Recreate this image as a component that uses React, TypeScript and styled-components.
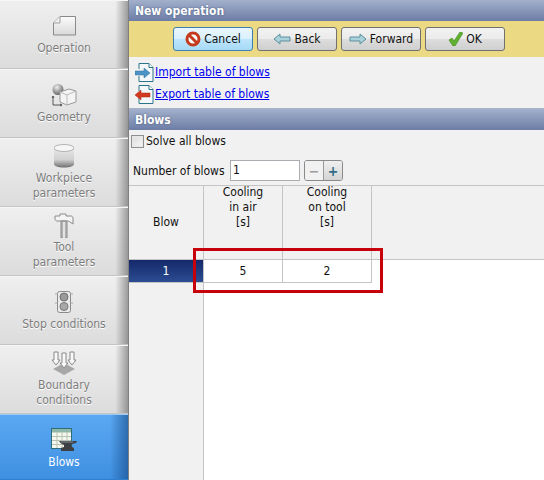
import React from "react";
import styled, { createGlobalStyle } from "styled-components";

const Global = createGlobalStyle`
  html, body { margin: 0; padding: 0; width: 544px; height: 480px; overflow: hidden; background: #f1f1f1; }
  body { font-family: "DejaVu Sans", "Noto Sans", sans-serif; font-stretch: condensed; font-size: 12px; color: #111; }
`;

const Page = styled.div`
  position: relative;
  display: flex;
  width: 544px;
  height: 480px;
  overflow: hidden;
`;

const Sidebar = styled.nav`
  display: flex;
  flex-direction: column;
  width: 128px;
  height: 480px;
  flex: none;
  background: #e6e6e6;
`;

const NavItem = styled.div<{ $active?: boolean; $h?: number; $two?: boolean }>`
  height: ${(p) => p.$h ?? 69}px;
  box-sizing: border-box;
  flex: none;
  display: flex;
  flex-direction: column;
  align-items: center;
  padding-top: ${(p) => (p.$two ? 5 : 13)}px;
  color: ${(p) => (p.$active ? "#ffffff" : "#7d7d7d")};
  text-shadow: ${(p) => (p.$active ? "none" : "0 1px 0 #fff")};
  line-height: 15px;
  text-align: center;
  border-bottom: 1px solid ${(p) => (p.$active ? "#2f7fd0" : "#c4c4c4")};
  border-top: 1px solid ${(p) => (p.$active ? "#9ccbf6" : "#f6f6f6")};
  background: ${(p) =>
    p.$active
      ? "linear-gradient(90deg,rgba(0,0,0,0) 86%,rgba(20,70,130,.6) 100%),linear-gradient(180deg,#5aa8f2,#3f90e2)"
      : "linear-gradient(90deg,rgba(0,0,0,0) 90%,rgba(90,90,90,.55) 100%),linear-gradient(180deg,#efefef,#dcdcdc)"};
`;

const IconSlot = styled.div<{ $two?: boolean }>`
  height: ${(p) => (p.$two ? 27 : 24)}px;
  margin-bottom: ${(p) => (p.$two ? 0 : 3)}px;
  display: flex;
  align-items: ${(p) => (p.$two ? "flex-start" : "center")};
  justify-content: center;
  flex: none;
`;

const Main = styled.main`
  flex: 1;
  display: flex;
  flex-direction: column;
  min-width: 0;
  border-left: 1px solid #7f7f7f;
`;

const SectionBar = styled.div`
  height: 21px;
  flex: none;
  box-sizing: border-box;
  padding-left: 6px;
  background: linear-gradient(180deg, #a3b0cc, #6c7da6);
  color: #fff;
  font-weight: 700;
  line-height: 22px;
  text-shadow: 0 0 2px #46557a;
`;

const Toolbar = styled.div`
  height: 36px;
  flex: none;
  box-sizing: border-box;
  display: flex;
  align-items: center;
  gap: 4px;
  padding-left: 44px;
  background: #ecd983;
`;

const ToolButton = styled.button<{ $focused?: boolean }>`
  width: 80px;
  height: 24px;
  box-sizing: border-box;
  padding: 0;
  display: flex;
  align-items: center;
  justify-content: center;
  gap: 3px;
  border-radius: 3px;
  font: inherit;
  color: #111;
  border: 1px solid ${(p) => (p.$focused ? "#3c7fb1" : "#707070")};
  background: ${(p) =>
    p.$focused
      ? "linear-gradient(180deg,#eaf6fd 0,#d9f0fc 50%,#bee6fd 50%,#a7d9f5 100%)"
      : "linear-gradient(180deg,#f2f2f2 0,#ebebeb 50%,#dddddd 50%,#cfcfcf 100%)"};
`;

const LinksPanel = styled.div`
  height: 52px;
  flex: none;
  box-sizing: border-box;
  padding: 7px 0 0 6px;
  display: flex;
  flex-direction: column;
  gap: 5px;
  border-bottom: 1px solid #a9b2c8;
`;

const LinkRow = styled.div`
  display: flex;
  align-items: center;
  height: 17px;
`;

const LinkText = styled.a`
  color: #0000ee;
  text-decoration: underline;
  line-height: 17px;
`;

const CheckRow = styled.label`
  height: 22px;
  flex: none;
  box-sizing: border-box;
  display: flex;
  align-items: center;
  gap: 2px;
  padding-left: 2px;
`;

const CheckBox = styled.span`
  width: 13px;
  height: 13px;
  box-sizing: border-box;
  border: 1px solid #8e8f8f;
  background: linear-gradient(135deg, #dcdcdc, #f6f6f6);
  box-shadow: inset 0 0 0 1px #e8e8e8;
`;

const CountRow = styled.div`
  height: 34px;
  flex: none;
  box-sizing: border-box;
  display: flex;
  align-items: center;
  padding: 4px 0 0 4px;
  border-bottom: 1px solid #c4c4c4;
`;

const CountLabel = styled.span`
  width: 97px;
  flex: none;
`;

const CountInput = styled.div`
  width: 70px;
  height: 21px;
  box-sizing: border-box;
  border: 1px solid #abadb3;
  background: #fff;
  padding-left: 2px;
  line-height: 19px;
`;

const Stepper = styled.div`
  margin-left: 4px;
  display: flex;
  width: 39px;
  height: 21px;
  box-sizing: border-box;
  border: 1px solid #8a8a8a;
  border-radius: 3px;
  overflow: hidden;
`;

const StepButton = styled.span<{ $on?: boolean }>`
  flex: 1;
  display: flex;
  align-items: center;
  justify-content: center;
  font-weight: 700;
  font-size: 14px;
  line-height: 1;
  color: ${(p) => (p.$on ? "#2f6d86" : "#9a9a9a")};
  background: ${(p) => (p.$on ? "linear-gradient(180deg,#f0f0f0,#d4d4d4)" : "#f1f1f1")};
  & + & { border-left: 1px solid #9a9a9a; }
`;

const Table = styled.div`
  flex: 1;
  display: grid;
  grid-template-columns: 75px 79px 89px 1fr;
  grid-template-rows: 74px 23px 1fr;
  min-height: 0;
`;

const HeadCell = styled.div`
  display: flex;
  align-items: center;
  justify-content: center;
  text-align: center;
  box-sizing: border-box;
  line-height: 15px;
  border-right: 1px solid #c4c4c4;
  border-bottom: 1px solid #c4c4c4;
`;

const HeadLines = styled.div`
  margin-top: -1px;
`;

const HeadTop = styled(HeadCell)`
  align-items: flex-start;
`;

const RowHead = styled.div`
  display: flex;
  align-items: center;
  justify-content: center;
  box-sizing: border-box;
  border-right: 1px solid #c4c4c4;
  border-bottom: 1px solid #c4c4c4;
  color: #fff;
  background: linear-gradient(180deg, #14296a, #2c4c92);
`;

const Cell = styled.div`
  display: flex;
  align-items: center;
  justify-content: center;
  box-sizing: border-box;
  background: #fff;
  border-right: 1px solid #c4c4c4;
  border-bottom: 1px solid #c4c4c4;
`;

const Spacer = styled.div`
  background: #fff;
`;

const LeftFill = styled.div`
  border-right: 1px solid #c4c4c4;
`;

const RightFill = styled.div`
  grid-column: 2 / 5;
  background: #fff;
`;

const HeadFill = styled.div`
  border-bottom: 1px solid #c4c4c4;
`;

const Highlight = styled.div`
  position: absolute;
  left: 193px;
  top: 248px;
  width: 190px;
  height: 45px;
  box-sizing: border-box;
  border: 3px solid #c8000b;
  pointer-events: none;
`;

const ArrowIcon = ({ dir }: { dir: "l" | "r" }) => (
  <svg width="18" height="12" viewBox="0 0 18 12">
    <path
      d={dir === "l" ? "M1 6 7 1v3h10v4H7v3z" : "M17 6 11 1v3H1v4h10v3z"}
      fill="#a9d2da"
      stroke="#5e8f9f"
      strokeWidth="1"
    />
  </svg>
);

const DocArrow = ({ red }: { red?: boolean }) => (
  <svg width="20" height="19" viewBox="0 0 20 19" style={{ flex: "none" }}>
    <path d="M4 .5h10l4 4v14H4z" fill="#f4f8fa" stroke="#2b7489" />
    <path d="M14 .5v4h4" fill="#fff" stroke="#2b7489" />
    <rect x="0" y="6" width="9" height="7" fill="#f1f1f1" />
    {red ? (
      <path d="M0 10 6 5v3h9v4H6v3z" fill="#d23a1f" stroke="#a42a14" strokeWidth=".5" />
    ) : (
      <path d="M15 10 9 5v3H0v4h9v3z" fill="#4c93c6" stroke="#30739f" strokeWidth=".5" />
    )}
  </svg>
);

const icons = {
  operation: (
    <svg width="24" height="20" viewBox="0 0 24 20">
      <defs>
        <linearGradient id="op" x1="0" y1="0" x2="0" y2="1">
          <stop offset="0" stopColor="#fbfbfb" />
          <stop offset="1" stopColor="#d9d9d9" />
        </linearGradient>
      </defs>
      <path d="M8 .5h15.500v18.500H1.500V7z" fill="url(#op)" stroke="#8a8a8a" />
      <path d="M8 .5V7H1.500" fill="#eee" stroke="#a0a0a0" />
    </svg>
  ),
  geometry: (
    <svg width="26" height="24" viewBox="0 0 26 24">
      <defs>
        <radialGradient id="sph" cx=".4" cy=".3" r=".7">
          <stop offset="0" stopColor="#eee" />
          <stop offset="1" stopColor="#666" />
        </radialGradient>
      </defs>
      <circle cx="7" cy="6.500" r="5.500" fill="url(#sph)" />
      <path d="M9 9 18 6l7 2v11l-9 3-7-3z" fill="#f4f4f4" stroke="#999" />
      <path d="M9 9l7 3 9-4M16 12v10" fill="none" stroke="#bbb" />
      <path d="M2 13v9h9M2 13l-1 2M2 13l1 2M11 22l-2-1M11 22l-2 1" fill="none" stroke="#555" />
    </svg>
  ),
  workpiece: (
    <svg width="20" height="24" viewBox="0 0 20 24">
      <defs>
        <linearGradient id="cyl" x1="0" y1="0" x2="0" y2="1">
          <stop offset="0" stopColor="#e8e8e8" />
          <stop offset=".6" stopColor="#d0d0d0" />
          <stop offset="1" stopColor="#6f6f6f" />
        </linearGradient>
      </defs>
      <path d="M0 4v16c0 2 4 3.500 10 3.500S20 22 20 20V4z" fill="url(#cyl)" />
      <ellipse cx="10" cy="4" rx="10" ry="3.500" fill="#f6f6f6" stroke="#8a8a8a" strokeWidth=".6" />
    </svg>
  ),
  tool: (
    <svg width="20" height="25" viewBox="0 0 20 25">
      <path d="M1 3h5V1h6v2h5c1 0 2 1 2 2v6l-3-2c-1-1-2-1-3-1H3C2 8 1 7 1 6z" fill="#f4f4f4" stroke="#8a8a8a" />
      <path d="M7 8h6v17H7z" fill="#b5b5b5" stroke="#8a8a8a" />
      <path d="M9 9h2v16H9z" fill="#e2e2e2" />
    </svg>
  ),
  stop: (
    <svg width="20" height="22" viewBox="0 0 20 22">
      <rect x="3.500" y=".5" width="13" height="21" rx="2" fill="#e9e9e9" stroke="#8b8b8b" />
      <circle cx="10" cy="6" r="4" fill="#9a9a9a" stroke="#6f6f6f" />
      <circle cx="10" cy="15.500" r="4" fill="#a8a8a8" stroke="#777" />
      <path d="M1 3h2.500M1 12h2.500M16.500 3H19M16.500 12H19" stroke="#aaa" />
    </svg>
  ),
  boundary: (
    <svg width="24" height="24" viewBox="0 0 24 24">
      <path d="M12 12 23 18l-11 6L1 18z" fill="#a7a7a7" />
      <path d="M2 1h4v8h2l-4 5-4-5h2zM10 2h4v10h2l-4 5-4-5h2zM18 1h4v8h2l-4 5-4-5h2z" fill="#f8f8f8" stroke="#8a8a8a" />
    </svg>
  ),
  blows: (
    <svg width="26" height="25" viewBox="0 0 26 25">
      <rect x=".5" y=".5" width="20" height="20" fill="#f6f8ef" stroke="#2f6d78" />
      <rect x="1" y="1" width="19" height="3.500" fill="#8fb8a8" />
      <path d="M1 8.500h19M1 12.500h19M1 16.500h19M6 4v16M11 4v16M16 4v16" stroke="#b8c2b0" />
      <path d="M8 13h18l-1 2c-2 0-4 1-5 2l1 2 2 1v3H10v-3l3-1v-2c-2-1-4-2-5-4z" fill="#3d4146" />
      <path d="M10 14h12" stroke="#8a8f95" />
    </svg>
  ),
};

const nav: { icon: React.ReactNode; lines: string[]; h?: number; active?: boolean }[] = [
  { icon: icons.operation, lines: ["Operation"] },
  { icon: icons.geometry, lines: ["Geometry"] },
  { icon: icons.workpiece, lines: ["Workpiece", "parameters"] },
  { icon: icons.tool, lines: ["Tool", "parameters"] },
  { icon: icons.stop, lines: ["Stop conditions"] },
  { icon: icons.boundary, lines: ["Boundary", "conditions"] },
  { icon: icons.blows, lines: ["Blows"], h: 66, active: true },
];

const Cancel = (
  <svg width="16" height="16" viewBox="0 0 16 16">
    <circle cx="8" cy="8" r="6" fill="#fff" stroke="#c43a1c" strokeWidth="3" />
    <path d="M4 4l8 8" stroke="#c43a1c" strokeWidth="3" />
  </svg>
);

const Check = (
  <svg width="15" height="14" viewBox="0 0 15 14">
    <path d="M1 8l3-2 2 3 6-9 3 1-8 13H5z" fill="#5fb12f" stroke="#3f8a1d" strokeWidth=".6" />
  </svg>
);

export default function App() {
  return (
    <>
      <Global />
      <Page>
        <Sidebar>
          {nav.map((n) => {
            const two = n.lines.length > 1;
            return (
              <NavItem key={n.lines[0]} $active={n.active} $h={n.h} $two={two}>
                <IconSlot $two={two}>{n.icon}</IconSlot>
                {n.lines.map((l) => (
                  <span key={l}>{l}</span>
                ))}
              </NavItem>
            );
          })}
        </Sidebar>
        <Main>
          <SectionBar>New operation</SectionBar>
          <Toolbar>
            <ToolButton $focused>{Cancel}Cancel</ToolButton>
            <ToolButton><ArrowIcon dir="l" />Back</ToolButton>
            <ToolButton><ArrowIcon dir="r" />Forward</ToolButton>
            <ToolButton>{Check}OK</ToolButton>
          </Toolbar>
          <LinksPanel>
            <LinkRow><DocArrow /><LinkText href="#">Import table of blows</LinkText></LinkRow>
            <LinkRow><DocArrow red /><LinkText href="#">Export table of blows</LinkText></LinkRow>
          </LinksPanel>
          <SectionBar>Blows</SectionBar>
          <CheckRow><CheckBox />Solve all blows</CheckRow>
          <CountRow>
            <CountLabel>Number of blows</CountLabel>
            <CountInput>1</CountInput>
            <Stepper>
              <StepButton>−</StepButton>
              <StepButton $on>+</StepButton>
            </Stepper>
          </CountRow>
          <Table>
            <HeadCell>Blow</HeadCell>
            <HeadTop><HeadLines>Cooling<br />in air<br />[s]</HeadLines></HeadTop>
            <HeadTop><HeadLines>Cooling<br />on tool<br />[s]</HeadLines></HeadTop>
            <HeadFill />
            <RowHead>1</RowHead>
            <Cell>5</Cell>
            <Cell>2</Cell>
            <Spacer />
            <LeftFill />
            <RightFill />
          </Table>
        </Main>
        <Highlight />
      </Page>
    </>
  );
}
